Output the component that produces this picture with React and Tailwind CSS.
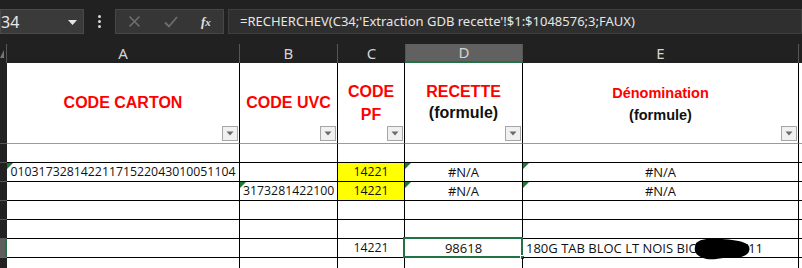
import React from 'react';

const GRID = 'grid grid-cols-[7px_233px_98px_67px_118px_276px_1fr]';

// small green "error indicator" triangle in the top-left corner of a cell
function Flag() {
  return (
    <span className="absolute left-0 top-0 h-0 w-0 border-t-[6px] border-r-[6px] border-t-[#1e7b34] border-r-transparent" />
  );
}

function FilterButton() {
  return (
    <span className="absolute bottom-[2px] right-[1px] flex h-[15px] w-[16px] items-center justify-center border border-[#a6a6a6] bg-[#f0f0f0]">
      <svg width="8" height="5" viewBox="0 0 8 5">
        <path d="M0.5 0.5h7L4 4.5z" fill="#6b6b6b" />
      </svg>
    </span>
  );
}

function RowHead({ selected }) {
  return (
    <div
      className={
        selected
          ? 'border-b border-[#6a6a6a] bg-[#5f5f5f] shadow-[inset_-2px_0_0_#217346]'
          : 'border-b border-[#555] bg-[#222]'
      }
    />
  );
}

function Cell({ children, className = '', flag }) {
  return (
    <div className={`relative flex items-center overflow-visible border-r border-b border-black whitespace-nowrap ${className}`}>
      {flag && <Flag />}
      {children}
    </div>
  );
}

export default function App() {
  const cellFont = { fontFamily: '"Open Sans", "Noto Sans", sans-serif' };

  return (
    <div className="w-[802px] h-[268px] overflow-hidden bg-[#212121]" style={{ fontFamily: '"Noto Sans", "Open Sans", sans-serif' }}>
      {/* Formula bar */}
      <div className="flex h-[44px] items-start pt-[9px]">
        <div className="relative flex h-[25px] w-[84px] items-center overflow-hidden border border-[#4a4a4a] bg-[#3a3a3a]">
          <span className="ml-[-10px] text-[16px] text-[#e8e8e8]">C34</span>
          <svg className="absolute right-[6px] top-[10px]" width="9" height="5" viewBox="0 0 9 5">
            <path d="M0 0h9L4.5 5z" fill="#e6e6e6" />
          </svg>
        </div>
        <div className="flex h-[25px] w-[31px] flex-col items-center justify-center gap-[2px]">
          <span className="h-[3px] w-[3px] rounded-full bg-[#d8d8d8]" />
          <span className="h-[3px] w-[3px] rounded-full bg-[#d8d8d8]" />
          <span className="h-[3px] w-[3px] rounded-full bg-[#d8d8d8]" />
        </div>
        <div className="flex h-[25px] w-[109px] items-center border border-[#474747] bg-[#363636] pl-[12px]">
          <svg width="13" height="13" viewBox="0 0 13 13">
            <path d="M1.5 1.5l10 10M11.5 1.5l-10 10" stroke="#6e6e6e" strokeWidth="1.6" />
          </svg>
          <svg className="ml-[23px]" width="14" height="12" viewBox="0 0 14 12">
            <path d="M1 6.5l4 4 8-9.5" stroke="#6e6e6e" strokeWidth="1.8" fill="none" />
          </svg>
          <span className="ml-[23px] text-[13px] italic font-bold text-[#e0e0e0]" style={{ fontFamily: '"Liberation Serif", serif' }}>
            f<span className="text-[11px]">x</span>
          </span>
        </div>
        <div className="ml-[4px] flex h-[25px] flex-1 items-center border border-[#3e3e3e] bg-[#2f2f2f] pl-[11px] text-[13px] text-[#e6e6e6]">
          =RECHERCHEV(C34;'Extraction GDB recette'!$1:$1048576;3;FAUX)
        </div>
      </div>

      {/* Column headers */}
      <div className={`${GRID} h-[19px] text-[15px] text-[#d4d4d4]`}>
        <div className="relative border-r border-[#555]">
          <svg className="absolute left-0 top-[6px]" width="4" height="8" viewBox="0 0 4 8">
            <path d="M4 0v8H0z" fill="#777" />
          </svg>
        </div>
        <div className="flex items-center justify-center border-r border-[#555] leading-none">A</div>
        <div className="flex items-center justify-center border-r border-[#555] leading-none">B</div>
        <div className="flex items-center justify-center leading-none">C</div>
        <div className="flex items-center justify-center border-x border-[#555] border-b-2 border-b-[#217346] bg-[#616161] leading-none">D</div>
        <div className="flex items-center justify-center border-r border-[#555] leading-none">E</div>
        <div />
      </div>

      {/* Sheet */}
      <div className="bg-white" style={cellFont}>
        {/* Header row */}
        <div className={`${GRID} h-[81px]`} style={{ fontFamily: '"Liberation Sans", Arial, sans-serif' }}>
          <div className="border-b border-[#555] bg-[#222]" />
          <div className="relative flex items-center justify-center border-r border-b border-r-black border-b-[#9b9b9b] text-[16px] font-bold text-[#ff0000]">
            CODE CARTON
            <FilterButton />
          </div>
          <div className="relative flex items-center justify-center border-r border-b border-r-black border-b-[#9b9b9b] text-[16px] font-bold text-[#ff0000]">
            CODE UVC
            <FilterButton />
          </div>
          <div className="relative flex flex-col items-center justify-center border-r border-b border-r-black border-b-[#9b9b9b] text-[16px] font-bold leading-[23px] text-[#ff0000]">
            <span>CODE</span>
            <span>PF</span>
            <FilterButton />
          </div>
          <div className="relative flex flex-col items-center justify-center border-r border-b border-r-black border-b-[#9b9b9b] pb-[2px] text-[16px] font-bold leading-[21px]">
            <span className="text-[#ff0000]">RECETTE</span>
            <span className="text-[#111]">(formule)</span>
            <FilterButton />
          </div>
          <div className="relative flex flex-col items-center justify-center border-r border-b border-r-black border-b-[#9b9b9b] pt-[2px] text-[14.5px] font-bold leading-[22px]">
            <span className="text-[#ff0000]">Dénomination</span>
            <span className="text-[#111]">(formule)</span>
            <FilterButton />
          </div>
          <div className="border-b border-[#9b9b9b]" />
        </div>

        {/* Data rows */}
        {[
          {},
          { a: '01031732814221171522043010051104', c: '14221', d: '#N/A', e: '#N/A', yellow: true, flagA: true, flagD: true, flagE: true },
          { b: '3173281422100', c: '14221', d: '#N/A', e: '#N/A', yellow: true, flagB: true, flagD: true, flagE: true },
          {},
          {},
          { c: '14221', d: '98618', sel: true, redacted: true },
          {},
        ].map((r, i) => (
          <div key={i} className={`${GRID} h-[19px] text-[12.3px] leading-none text-[#111]`}>
            <RowHead selected={r.sel} />
            <Cell className="justify-center" flag={r.flagA}>{r.a}</Cell>
            <Cell className="pl-[3px]" flag={r.flagB}>{r.b}</Cell>
            <Cell className={`justify-center ${r.yellow ? 'bg-[#ffff00]' : ''}`}>{r.c}</Cell>
            <Cell className="justify-center text-[13px]" flag={r.flagD}>
              {r.d}
              {r.sel && (
                <span className="pointer-events-none absolute -left-[2px] -top-[2px] -right-px -bottom-px border-2 border-[#217346]">
                  <span className="absolute -bottom-[4px] -right-[4px] h-[5px] w-[5px] border border-white bg-[#217346]" />
                </span>
              )}
            </Cell>
            <Cell className={r.redacted ? 'pl-[3px] text-[13px]' : 'justify-center text-[13px]'} flag={r.flagE}>
              {r.redacted ? (
                <>
                  <span>180G TAB BLOC LT NOIS BIO</span>
                  <span className="inline-block w-[42px]" />
                  <span>X11</span>
                  <svg className="absolute left-[171px] top-[-2px]" width="58" height="23" viewBox="0 0 60 23">
                    <path d="M2 6C6 1 20 0 32 2c10 1 20 2 24 6 3 4 1 9-4 11-6 3-14 1-20 2-8 1-16 3-23 0C2 19 0 14 1 10z" fill="#000" />
                  </svg>
                </>
              ) : (
                r.e
              )}
            </Cell>
            <div className="border-b border-black" />
          </div>
        ))}
      </div>
    </div>
  );
}
